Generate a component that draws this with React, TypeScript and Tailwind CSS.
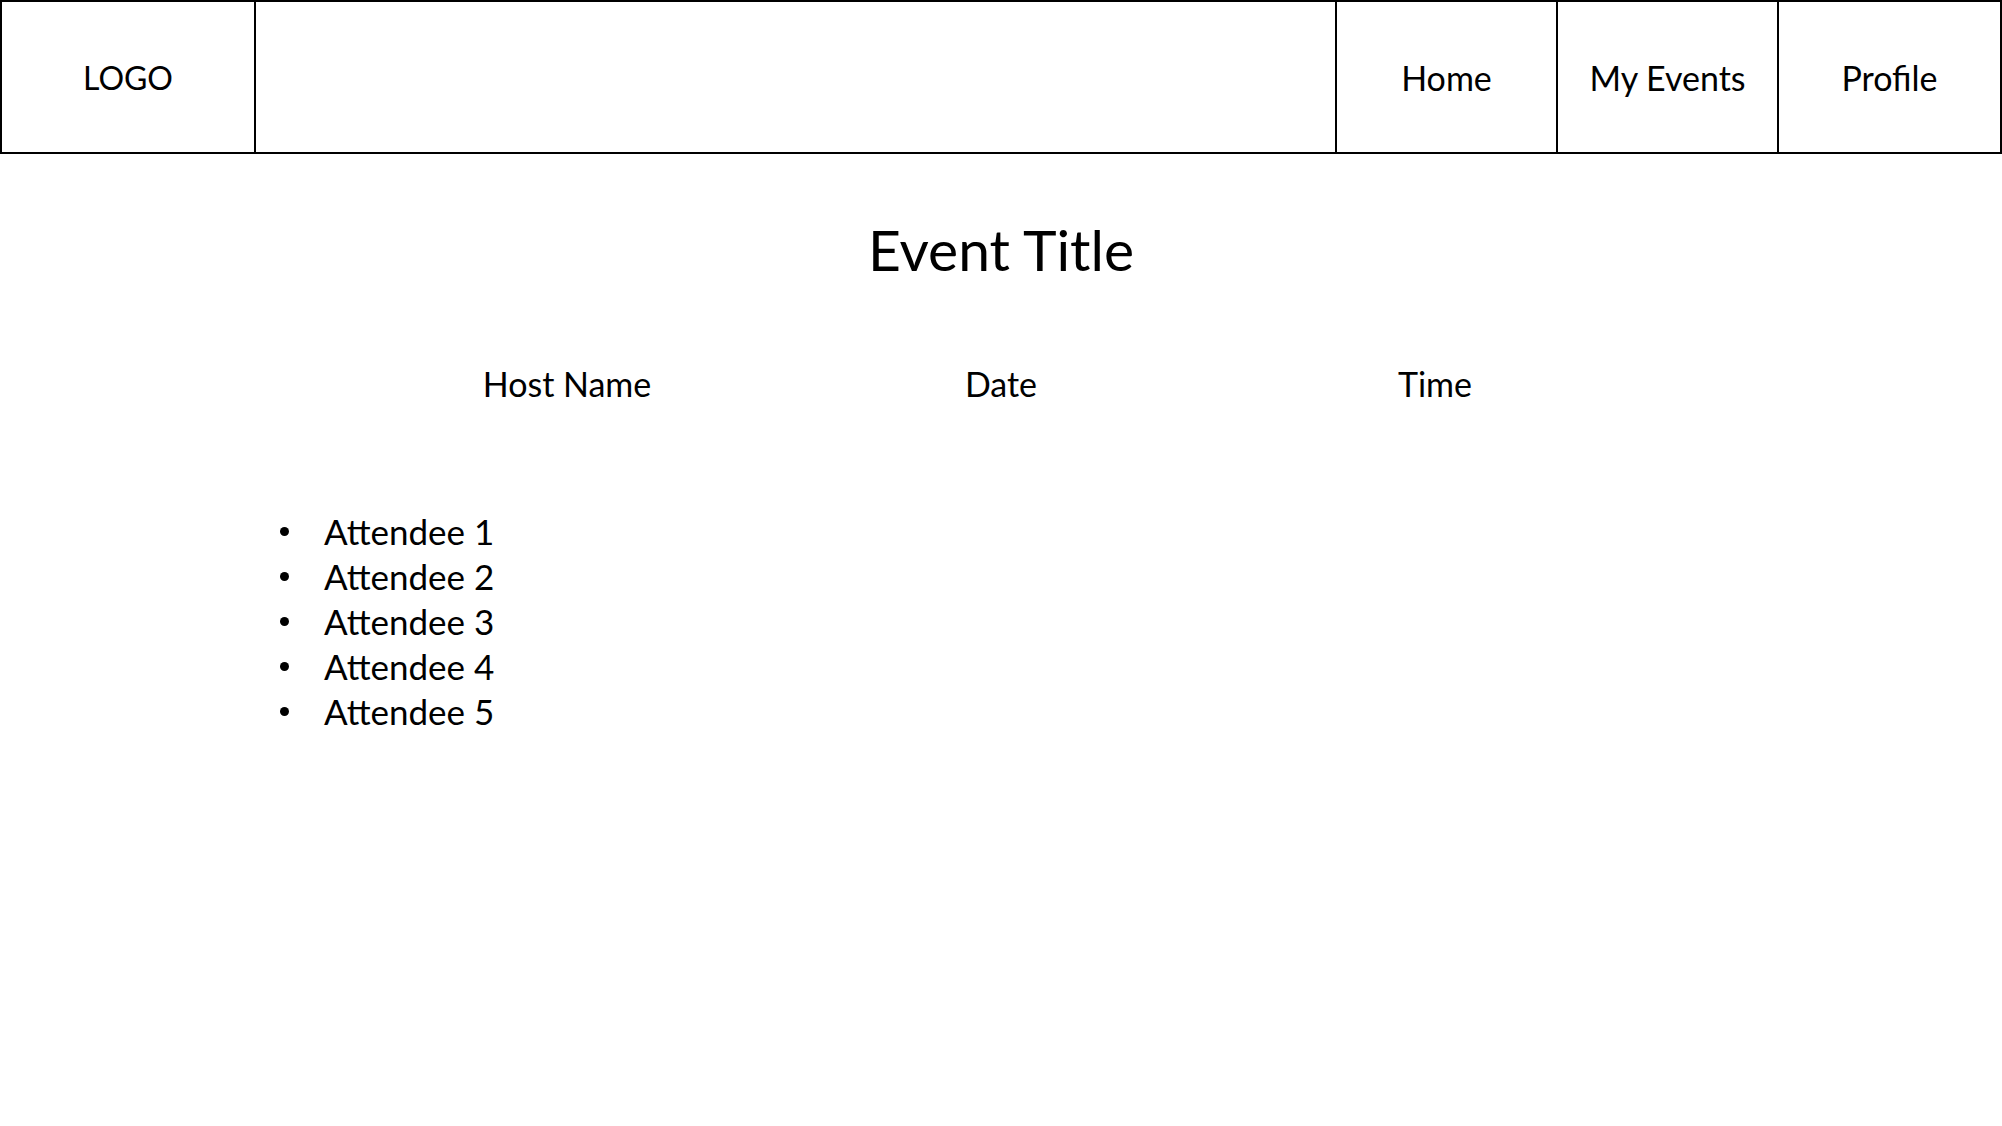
import React from 'react';

const navItems = ['Home', 'My Events', 'Profile'];
const attendees = ['Attendee 1', 'Attendee 2', 'Attendee 3', 'Attendee 4', 'Attendee 5'];

const App = () => {
  return (
    <div className="min-h-screen w-full bg-white text-black font-['Lato','Open_Sans',sans-serif]">
      {/* Header */}
      <header className="flex h-[154px] border-2 border-black">
        <div className="flex w-[254px] items-center justify-center border-r-2 border-black pt-[2px] text-[32px]">
          LOGO
        </div>
        <div className="flex-1 border-r-2 border-black" />
        {navItems.map((item, i) => (
          <div
            key={item}
            className={
              i < navItems.length - 1
                ? 'flex w-[221px] items-center justify-center border-r-2 border-black text-[34px]'
                : 'flex w-[221px] items-center justify-center text-[34px]'
            }
          >
            {item}
          </div>
        ))}
      </header>

      {/* Event details */}
      <main>
        <h1 className="mt-[59px] text-center text-[57px] leading-[72px]">Event Title</h1>

        <div className="mx-auto mt-[76px] grid w-[1302px] grid-cols-3 text-center text-[34px] leading-[45px]">
          <div>Host Name</div>
          <div>Date</div>
          <div>Time</div>
        </div>

        <ul className="ml-[280px] mt-[103px] text-[35px] leading-[45px]">
          {attendees.map((name) => (
            <li key={name} className="flex items-center">
              <span className="flex w-[44px] items-center">
                <span className="h-[9px] w-[9px] rounded-full bg-black" />
              </span>
              <span>{name}</span>
            </li>
          ))}
        </ul>
      </main>
    </div>
  );
};

export default App;
